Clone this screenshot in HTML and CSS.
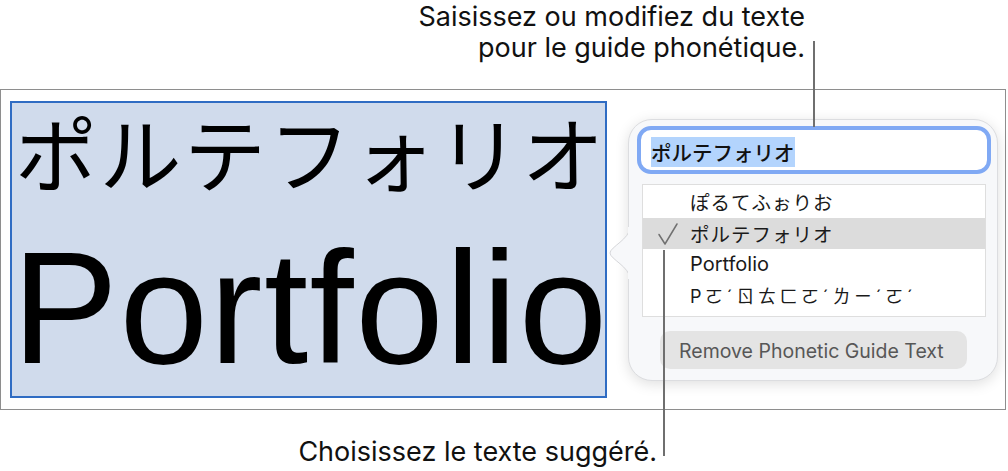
FILE: index.html
```html
<!DOCTYPE html>
<html lang="fr">
<head>
<meta charset="utf-8">
<title>Guide phonétique</title>
<link rel="stylesheet" href="styles.css">
</head>
<body>
<div class="page">
  <p class="caption caption-top">Saisissez ou modifiez du texte<br>pour le guide phonétique.</p>
  <div class="canvas">
    <div class="selection">
      <div class="jp-big" lang="ja">ポルテフォリオ</div>
      <div class="en-big">Portfolio</div>
    </div>
    <div class="popover">
      <svg class="popover-arrow" width="22" height="52" viewBox="0 0 22 52" aria-hidden="true">
        <path d="M21 0 C21 12 1 20 1 26 C1 32 21 40 21 52 Z" fill="#f7f8fa" stroke="#d6d7da" stroke-width="1"/>
        <rect x="19" y="0" width="3" height="52" fill="#f7f8fa"/>
      </svg>
      <div class="field"><span class="field-sel" lang="ja">ポルテフォリオ</span></div>
      <ul class="list">
        <li class="row" lang="ja">ぽるてふぉりお</li>
        <li class="row row-selected" lang="ja">
          <svg class="check" width="24" height="24" viewBox="0 0 24 24" aria-hidden="true">
            <path d="M2 12.5 L8 22 L20 2" fill="none" stroke="#707070" stroke-width="1.5" stroke-linecap="round" stroke-linejoin="round"/>
          </svg>ポルテフォリオ</li>
        <li class="row">Portfolio</li>
        <li class="row row-bpmf" lang="zh-TW">Pㄛˊㄖㄊㄈㄛˊㄌㄧˊㄛˊ</li>
      </ul>
      <div class="button">Remove Phonetic Guide Text</div>
    </div>
  </div>
  <p class="caption caption-bottom">Choisissez le texte suggéré.</p>
  <span class="leader leader-top"></span>
  <span class="leader leader-bottom"></span>
</div>
</body>
</html>
```

FILE: styles.css
```css
html, body {
  margin: 0;
  padding: 0;
  background: #ffffff;
}

.page {
  position: relative;
  width: 1008px;
  height: 471px;
  overflow: hidden;
  font-family: "Inter", "Noto Sans", sans-serif;
  color: #111111;
}

.caption {
  margin: 0;
  font-size: 27px;
  line-height: 31px;
  text-align: right;
  color: #111;
}

.caption-top {
  padding-top: 1px;
  padding-right: 203px;
}

.caption-bottom {
  margin-top: 26px;
  padding-right: 351px;
}

.canvas {
  position: relative;
  margin-top: 26px;
  width: 1006px;
  height: 321px;
  box-sizing: border-box;
  border: 1px solid #8e8e8e;
  padding: 11px 0 0 9px;
}

.selection {
  width: 597px;
  height: 297px;
  box-sizing: border-box;
  background: #d0dbec;
  border: 2px solid #2f6cc3;
  padding: 8px 0 0 3px;
}

.jp-big {
  font-family: "Noto Sans CJK JP", sans-serif;
  font-size: 82px;
  line-height: 80px;
  letter-spacing: 2.5px;
  color: #000;
  white-space: nowrap;
}

.en-big {
  margin-top: 38px;
  margin-left: -3px;
  font-family: "Liberation Sans", Arial, sans-serif;
  font-size: 159px;
  line-height: 158px;
  letter-spacing: 1.5px;
  color: #000;
  white-space: nowrap;
}

.popover {
  position: absolute;
  left: 627px;
  top: 29px;
  width: 370px;
  height: 262px;
  box-sizing: border-box;
  background: #f7f8fa;
  border: 1px solid #dcdde0;
  border-radius: 24px;
  box-shadow: 0 3px 14px rgba(0, 0, 0, 0.13);
  padding: 6px 6px 0 8px;
}

.popover-arrow {
  position: absolute;
  left: -20px;
  top: 107px;
}

.field {
  height: 48px;
  box-sizing: border-box;
  background: #ffffff;
  border: 4px solid #80a9f4;
  border-radius: 14px;
  padding: 11px 0 0 10px;
  font-family: "Noto Sans CJK JP", sans-serif;
  font-size: 20.5px;
  font-weight: 500;
  line-height: 23px;
  color: #111;
}

.field-sel {
  background: #b3d4fd;
}

.list {
  list-style: none;
  margin: 10px 5px 0 5px;
  padding: 1px 0 6px 0;
  background: #ffffff;
  border: 1px solid #dedede;
  height: 133px;
  box-sizing: border-box;
}

.row {
  position: relative;
  height: 31.5px;
  line-height: 31px;
  padding-left: 47px;
  font-family: "Inter", "Noto Sans CJK JP", sans-serif;
  font-size: 20px;
  color: #1a1a1a;
}

.row[lang="ja"] {
  font-family: "Noto Sans CJK JP", sans-serif;
  font-size: 19.5px;
  letter-spacing: 1px;
}

.row-bpmf {
  font-family: "Inter", "Noto Sans CJK TC", sans-serif;
  font-size: 18px;
  letter-spacing: 3.5px;
}

.row-selected {
  background: #dcdcdc;
}

.check {
  position: absolute;
  left: 14px;
  top: 4px;
}

.button {
  margin: 14px 24px 0 23px;
  height: 38px;
  border-radius: 10px;
  background: #e4e4e4;
  padding-left: 19px;
  font-family: "Inter", "Noto Sans", sans-serif;
  font-size: 19.5px;
  line-height: 40px;
  color: #575757;
  white-space: nowrap;
}

.leader {
  position: absolute;
  width: 2px;
  background: #6f6f6f;
}

.leader-top {
  left: 813px;
  top: 41px;
  height: 86px;
}

.leader-bottom {
  left: 663px;
  top: 250px;
  height: 206px;
}
```
